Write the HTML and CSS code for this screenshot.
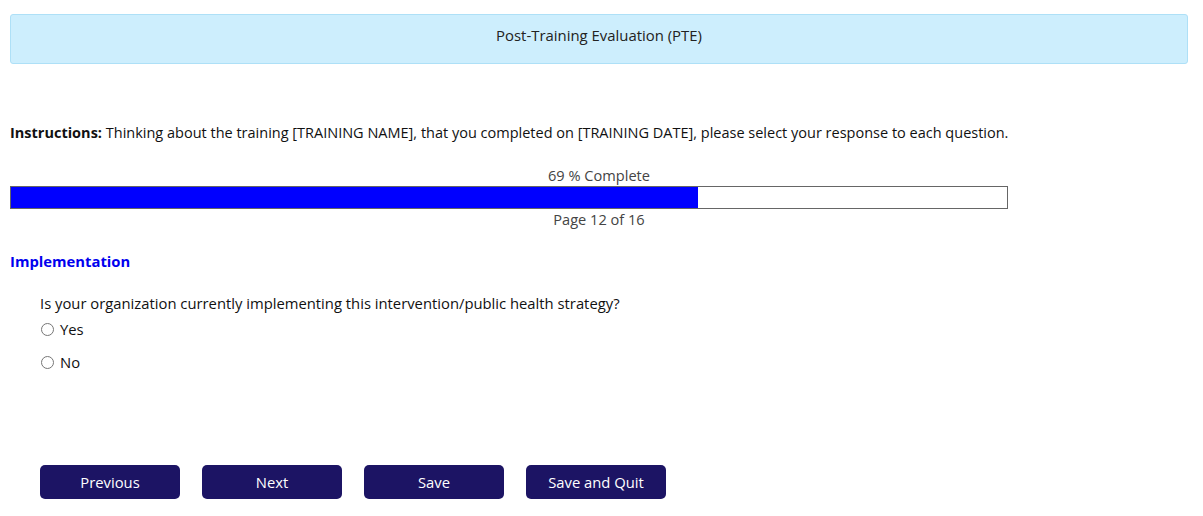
FILE: index.html
```html
<!DOCTYPE html>
<html lang="en">
<head>
<meta charset="UTF-8" />
<title>Post-Training Evaluation (PTE)</title>
<link rel="stylesheet" href="styles.css">
</head>
<body>
  <div class="page-header">Post-Training Evaluation (PTE)</div>

  <div class="survey">
    <p class="instructions"><b>Instructions:</b> Thinking about the training [TRAINING NAME], that you completed on [TRAINING DATE], please select your response to each question.</p>

    <div class="progress">
      <div class="progress-label">69 % Complete</div>
      <div class="progress-bar">
        <div class="progress-fill" style="width: 69%"></div>
      </div>
      <div class="progress-label page-label">Page 12 of 16</div>
    </div>

    <h2 class="section-title">Implementation</h2>

    <div class="question">
      <p class="question-text">Is your organization currently implementing this intervention/public health strategy?</p>
      <label class="choice"><input type="radio" name="implementing" value="yes"> Yes</label>
      <label class="choice"><input type="radio" name="implementing" value="no"> No</label>
    </div>

    <div class="nav-buttons">
      <button type="button">Previous</button>
      <button type="button">Next</button>
      <button type="button">Save</button>
      <button type="button">Save and Quit</button>
    </div>
  </div>
</body>
</html>
```

FILE: styles.css
```css
body {
  font-family: 'Open Sans', 'Liberation Sans', sans-serif;
  font-size: 14.8px;
  color: #111;
  background-color: #fff;
  margin: 0;
  padding: 14px 15px 0 10px;
}

.page-header {
  background-color: #cdeefd;
  border: 1px solid #aee0f7;
  border-radius: 3px;
  height: 48px;
  line-height: 40px;
  text-align: center;
  font-size: 14.9px;
  color: #222;
}

.instructions {
  margin: 59px 0 0;
  line-height: 20px;
  font-size: 14.5px;
}

.instructions b {
  font-weight: 700;
}

.progress {
  margin-top: 21px;
}

.progress-label {
  text-align: center;
  color: #444;
  line-height: 22px;
  font-size: 14.6px;
}

.page-label {
  line-height: 20px;
}

.progress-bar {
  width: 996px;
  height: 21px;
  border: 1px solid #666;
  background-color: #fff;
}

.progress-fill {
  height: 100%;
  background-color: #0000ff;
}

.section-title {
  margin: 22px 0 0;
  font-size: 14.8px;
  font-weight: 700;
  color: #0000ee;
  line-height: 20px;
}

.question {
  padding-left: 30px;
  margin-top: 22px;
}

.question-text {
  margin: 0 0 6px;
  line-height: 20px;
}

.choice {
  display: flex;
  align-items: center;
  height: 20px;
  margin-bottom: 13px;
}

.choice input {
  margin: 0 6px 0 1px;
  width: 13px;
  height: 13px;
}

.nav-buttons {
  display: flex;
  gap: 22px;
  padding-left: 30px;
  margin-top: 93px;
}

.nav-buttons button {
  width: 140px;
  height: 34px;
  background-color: #1c1464;
  color: #fff;
  border: none;
  border-radius: 5px;
  font-family: inherit;
  font-size: 14.8px;
  cursor: pointer;
}
```
